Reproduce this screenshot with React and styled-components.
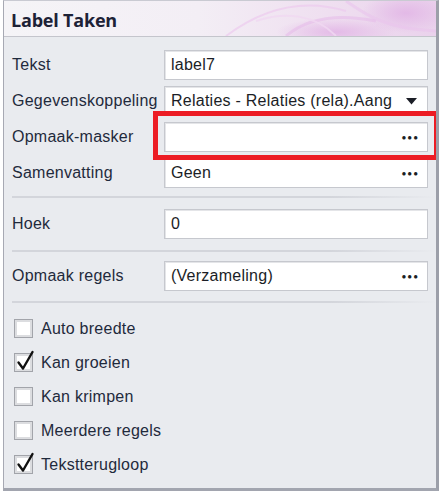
import React from "react";
import styled, { createGlobalStyle } from "styled-components";

const Global = createGlobalStyle`
  html, body { margin: 0; padding: 0; background: #ffffff; }
  body { font-family: "Liberation Sans", Arial, sans-serif; }
`;

const Frame = styled.div`
  position: relative;
  box-sizing: border-box;
  margin-left: 3px;
  width: 436px;
  height: 491px;
  background: #e9ebef;
  border-top: 1px solid #c9cad2;
  border-left: 1px solid #a7a9b3;
  border-right: 3px solid #9c9fa9;
  border-bottom: 3px solid #a2a5af;
  display: flex;
  flex-direction: column;
  overflow: hidden;
`;

const TitleBar = styled.div`
  position: relative;
  height: 35px;
  flex: none;
  display: flex;
  align-items: center;
  padding-left: 7px;
  background: linear-gradient(90deg, #f5f4f7 0%, #f3eef5 45%, #efdff0 75%, #ead2ec 100%);
  border-bottom: 1px solid #c4c5cc;
  overflow: hidden;
`;

const Deco = styled.svg`
  position: absolute;
  right: 0;
  top: 0;
  width: 300px;
  height: 35px;
`;

const Title = styled.h1`
  position: relative;
  margin: 3px 0 0 0;
  font-family: "Open Sans", "Liberation Sans", sans-serif;
  font-weight: 700;
  font-size: 18px;
  letter-spacing: -0.2px;
  color: #1d2236;
`;

const Body = styled.div`
  flex: 1;
  display: flex;
  flex-direction: column;
  padding: 0 7px 0 8px;
`;

const Section = styled.div`
  display: flex;
  flex-direction: column;
  gap: ${(p) => p.$gap || 6}px;
  padding: ${(p) => p.$pt}px 0 ${(p) => p.$pb}px 0;
`;

const Separator = styled.div`
  height: 2px;
  background: linear-gradient(90deg, #d3d5db 0%, #d3d5db 75%, rgba(211,213,219,0) 100%);
  margin-right: -7px;
`;

const Row = styled.div`
  display: grid;
  grid-template-columns: 152px 264px;
  align-items: center;
  height: 30px;
`;

const Label = styled.span`
  font-size: 16px;
  letter-spacing: 0.25px;
  color: #1f2a3c;
  white-space: nowrap;
`;

const Field = styled.div`
  box-sizing: border-box;
  height: 30px;
  background: #ffffff;
  border: 1px solid #c6c8ce;
  box-shadow: inset 1px 1px 0 #e4e5e8;
  display: flex;
  align-items: center;
  padding: 0 8px 0 6px;
  font-size: 16px;
  letter-spacing: 0.25px;
  color: #1b1e26;
`;

const Value = styled.span`
  flex: 1;
  white-space: nowrap;
`;

const Dots = styled.span`
  font-size: 8px;
  letter-spacing: 1px;
  color: #1b1e26;
  font-weight: 700;
`;

const Arrow = styled.svg`
  flex: none;
  margin-right: 2px;
`;

const Highlight = styled.div`
  position: absolute;
  left: 149px;
  top: 110px;
  width: 276px;
  height: 39px;
  border: 5px solid #ec1c24;
  pointer-events: none;
`;

const Checks = styled.div`
  display: flex;
  flex-direction: column;
  gap: 15px;
  padding: 16px 0 0 2px;
`;

const CheckRow = styled.label`
  display: flex;
  align-items: center;
  gap: 8px;
  height: 19px;
  font-size: 16px;
  letter-spacing: 0.25px;
  color: #1f2a3c;
`;

const Box = styled.span`
  position: relative;
  box-sizing: border-box;
  width: 19px;
  height: 19px;
  flex: none;
  border: 1px solid #a2a4aa;
  background: #ffffff;
  box-shadow: inset 0 0 0 2px #dcdde0;
`;

const Tick = styled.svg`
  position: absolute;
  left: 1px;
  top: -4px;
  width: 19px;
  height: 21px;
`;

function Check({ checked, children }) {
  return (
    <CheckRow>
      <Box>
        {checked && (
          <Tick viewBox="0 0 19 21">
            <path d="M2.5 12.5 L7 18.5 L16.5 2" fill="none" stroke="#111" strokeWidth="2.4" strokeLinecap="round" strokeLinejoin="round" />
          </Tick>
        )}
      </Box>
      {children}
    </CheckRow>
  );
}

function FieldRow({ label, value, extra }) {
  return (
    <Row>
      <Label>{label}</Label>
      <Field>
        <Value>{value}</Value>
        {extra === "dots" && <Dots>●●●</Dots>}
        {extra === "arrow" && (
          <Arrow width="11" height="7" viewBox="0 0 11 7">
            <path d="M0 0 H11 L5.5 6.5 Z" fill="#1b1e26" />
          </Arrow>
        )}
      </Field>
    </Row>
  );
}

export default function App() {
  return (
    <>
      <Global />
      <Frame>
        <TitleBar>
          <Deco viewBox="0 0 300 35" preserveAspectRatio="none">
            <defs>
              <radialGradient id="g1" cx="0.5" cy="0.5" r="0.5">
                <stop offset="0" stopColor="#e2b6e6" stopOpacity="0.9" />
                <stop offset="1" stopColor="#e2b6e6" stopOpacity="0" />
              </radialGradient>
            </defs>
            <ellipse cx="200" cy="31" rx="60" ry="14" fill="url(#g1)" />
            <ellipse cx="270" cy="12" rx="45" ry="20" fill="url(#g1)" />
            <path d="M90 35 C130 5, 170 -2, 210 10" fill="none" stroke="#eccaee" strokeWidth="2" opacity="0.7" />
            <path d="M150 35 C170 18, 200 12, 240 20" fill="none" stroke="#e6bde9" strokeWidth="3" opacity="0.6" />
            <path d="M210 0 C230 14, 250 28, 300 30" fill="none" stroke="#e9c4ec" strokeWidth="3" opacity="0.6" />
            <path d="M120 20 C150 10, 180 14, 200 35" fill="none" stroke="#f0d8f1" strokeWidth="2" opacity="0.8" />
          </Deco>
          <Title>Label Taken</Title>
        </TitleBar>
        <Body>
          <Section $pt={13} $pb={8}>
            <FieldRow label="Tekst" value="label7" />
            <FieldRow label="Gegevenskoppeling" value="Relaties - Relaties (rela).Aang" extra="arrow" />
            <FieldRow label="Opmaak-masker" value="" extra="dots" />
            <FieldRow label="Samenvatting" value="Geen" extra="dots" />
          </Section>
          <Separator />
          <Section $pt={11} $pb={11}>
            <FieldRow label="Hoek" value="0" />
          </Section>
          <Separator />
          <Section $pt={9} $pb={10}>
            <FieldRow label="Opmaak regels" value="(Verzameling)" extra="dots" />
          </Section>
          <Separator />
          <Checks>
            <Check>Auto breedte</Check>
            <Check checked>Kan groeien</Check>
            <Check>Kan krimpen</Check>
            <Check>Meerdere regels</Check>
            <Check checked>Tekstterugloop</Check>
          </Checks>
        </Body>
        <Highlight />
      </Frame>
    </>
  );
}
